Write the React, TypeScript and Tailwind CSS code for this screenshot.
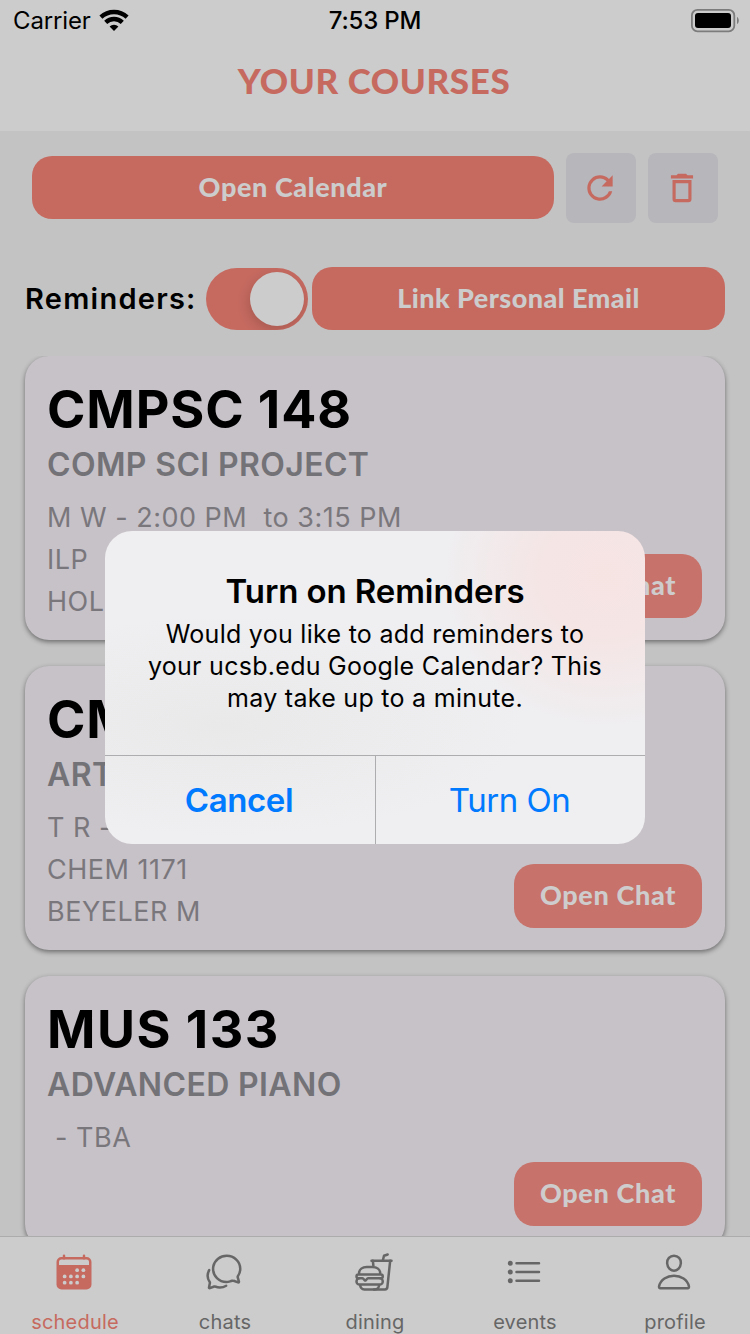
import React from "react";
import { IoChatbubblesOutline, IoFastFoodOutline, IoListOutline, IoPersonOutline } from "react-icons/io5";

interface Course {
  code: string;
  codeSpacing: string;
  name: string;
  lines: string[];
  height: string;
}

const courses: Course[] = [
  {
    code: "CMPSC 148",
    codeSpacing: "tracking-[0.9px]",
    name: "COMP SCI PROJECT",
    lines: ["M W - 2:00 PM  to 3:15 PM", "ILP", "HOLLERER T"],
    height: "h-[284px]",
  },
  {
    code: "CMPSC 190",
    codeSpacing: "tracking-[0.9px]",
    name: "ARTIFICIAL INTEL",
    lines: ["T R - 5:00 PM  to 6:15 PM", "CHEM 1171", "BEYELER M"],
    height: "h-[284px]",
  },
  {
    code: "MUS 133",
    codeSpacing: "tracking-[1.5px]",
    name: "ADVANCED PIANO",
    lines: [" - TBA"],
    height: "h-[272px]",
  },
];

function WifiIcon() {
  return (
    <svg width="30" height="23" viewBox="0 0 30 23" fill="none" stroke="#000" strokeWidth="4.4">
      <path d="M1.9 8.1A19.2 19.2 0 0 1 28.1 8.1" />
      <path d="M6.7 13.3A12 12 0 0 1 23.3 13.3" />
      <path d="M10.6 17.4A6.5 6.5 0 0 1 19.4 17.4L15 22Z" fill="#000" stroke="none" />
    </svg>
  );
}

function BatteryIcon() {
  return (
    <svg width="50" height="24" viewBox="0 0 50 24">
      <rect x="1.9" y="0.9" width="42.4" height="21.4" rx="5.5" fill="none" stroke="#7c7c7c" strokeWidth="1.8" />
      <rect x="5" y="4" width="36" height="15" rx="3" fill="#000" />
      <path d="M47 8C49.4 9 49.4 14 47 15Z" fill="#7c7c7c" />
    </svg>
  );
}

function RefreshIcon() {
  return (
    <svg width="38" height="38" viewBox="0 0 24 24" fill="#c66a60">
      <path d="M17.65 6.35A7.96 7.96 0 0 0 12 4a8 8 0 1 0 7.73 10h-2.08A6 6 0 1 1 12 6c1.66 0 3.14.69 4.22 1.78L13 11h7V4z" />
    </svg>
  );
}

function TrashIcon() {
  return (
    <svg width="38" height="38" viewBox="0 0 24 24" fill="#c66a60">
      <path d="M6 19a2 2 0 0 0 2 2h8a2 2 0 0 0 2-2V7H6v12zM8 9h8v10H8V9zm7.5-5l-1-1h-5l-1 1H5v2h14V4z" />
    </svg>
  );
}

function CalendarIcon() {
  return (
    <svg width="40" height="40" viewBox="0 0 512 512">
      <g fill="none" stroke="#c66a60" strokeWidth="32" strokeLinecap="round">
        <rect x="48" y="80" width="416" height="384" rx="48" />
        <path d="M128 48v32M384 48v32" />
      </g>
      <path d="M48 166h416v250a48 48 0 0 1-48 48H96a48 48 0 0 1-48-48z" fill="#c66a60" />
      <g fill="#cccccc">
        <circle cx="296" cy="232" r="24" />
        <circle cx="376" cy="232" r="24" />
        <circle cx="136" cy="312" r="24" />
        <circle cx="216" cy="312" r="24" />
        <circle cx="296" cy="312" r="24" />
        <circle cx="376" cy="312" r="24" />
        <circle cx="136" cy="392" r="24" />
        <circle cx="216" cy="392" r="24" />
        <circle cx="296" cy="392" r="24" />
      </g>
    </svg>
  );
}

function StatusBar() {
  return (
    <div className="grid h-[41px] grid-cols-3 items-center pr-[10px] pl-[13px] text-[24px]">
      <div className="flex items-center gap-2">
        <span className="tracking-[-0.15px]">Carrier</span>
        <WifiIcon />
      </div>
      <span className="pr-[3px] text-center font-medium tracking-[-0.15px]">7:53 PM</span>
      <div className="flex justify-end">
        <BatteryIcon />
      </div>
    </div>
  );
}

function CourseCard({ course }: { course: Course }) {
  return (
    <article
      className={`relative shrink-0 rounded-[24px] bg-[#c7c2c8] pt-[23px] pl-[22px] shadow-[0_2px_5px_rgba(0,0,0,0.45)] ${course.height}`}
    >
      <h2 className={`h-[61px] text-[52px] leading-[61px] font-bold ${course.codeSpacing}`}>{course.code}</h2>
      <h3 className="mb-2 h-12 pt-px text-[32px] leading-[48px] font-semibold tracking-[0.37px] text-[#737277]">
        {course.name}
      </h3>
      {course.lines.map((line) => (
        <p key={line} className="h-[42px] pt-px text-[27px] leading-[42px] tracking-[0.5px] whitespace-pre text-[#7a777c]">
          {line}
        </p>
      ))}
      <button className="absolute right-[23px] bottom-[22px] h-16 w-[188px] rounded-[20px] bg-[#c7726a] pb-px font-[Lato,sans-serif] text-[27px] font-black tracking-[0.65px] text-[#cecccc]">
        Open Chat
      </button>
    </article>
  );
}

const tabs = [
  { label: "schedule", icon: <CalendarIcon />, color: "text-[#c66a60]" },
  { label: "chats", icon: <IoChatbubblesOutline size={40} />, color: "text-[#666666]" },
  { label: "dining", icon: <IoFastFoodOutline size={40} />, color: "text-[#666666]" },
  { label: "events", icon: <IoListOutline size={40} />, color: "text-[#666666]" },
  { label: "profile", icon: <IoPersonOutline size={40} />, color: "text-[#666666]" },
];

function TabBar() {
  return (
    <nav className="grid h-[98px] shrink-0 grid-cols-5 border-t border-[#acacac] bg-[#cccccc]">
      {tabs.map((tab) => (
        <div key={tab.label} className={`flex flex-col items-center pt-[15px] ${tab.color}`}>
          <div className="mr-[2px]">{tab.icon}</div>
          <span className="mt-[18px] text-[20px] leading-6 tracking-[0.2px]">{tab.label}</span>
        </div>
      ))}
    </nav>
  );
}

function ReminderDialog() {
  return (
    <div
      role="dialog"
      className="absolute top-[531px] left-[105px] flex h-[313px] w-[540px] flex-col overflow-hidden rounded-[27px] bg-[#efeef0] bg-[radial-gradient(ellipse_160px_150px_at_500px_45px,#f6e4e3_0%,#f5e5e5_40%,#efeef000_100%),radial-gradient(ellipse_300px_110px_at_120px_195px,#e9e9ea_0%,#efeef000_100%)]"
    >
      <div className="h-[224px] pt-10 text-center">
        <h1 className="h-[47px] text-[33px] leading-10 font-semibold tracking-[-0.1px]">Turn on Reminders</h1>
        <p className="text-[25px] leading-8 tracking-[0.28px]">
          Would you like to add reminders to
          <br />
          your ucsb.edu Google Calendar? This
          <br />
          may take up to a minute.
        </p>
      </div>
      <div className="flex h-[89px] border-t border-[#adadaf] text-[33px] text-[#007aff]">
        <button className="w-[271px] border-r border-[#adadaf] pt-[2px] pr-[2px] font-semibold tracking-[-0.4px]">
          Cancel
        </button>
        <button className="flex-1 pt-[2px] pr-[2px] tracking-[-0.5px]">Turn On</button>
      </div>
    </div>
  );
}

export default function App() {
  return (
    <div className="relative flex h-[1334px] w-[750px] flex-col overflow-hidden bg-[#c3c3c3] font-[Inter,sans-serif] text-black">
      <header className="h-[131px] shrink-0 bg-[#cccccc]">
        <StatusBar />
        <div className="flex h-[79px] items-center justify-center pr-[2px] font-[Lato,sans-serif] text-[35px] font-black tracking-[0.6px] text-[#c66a60]">
          YOUR COURSES
        </div>
      </header>

      <div className="flex shrink-0 items-start gap-3 px-8 pt-[22px]">
        <button className="mt-[3px] h-[63px] flex-1 rounded-[20px] bg-[#c66a60] font-[Lato,sans-serif] text-[27px] font-black tracking-[0.6px] text-[#cccccc]">
          Open Calendar
        </button>
        <div className="flex size-[70px] items-center justify-center rounded-lg bg-[#b7b6bb] pr-[2px]">
          <RefreshIcon />
        </div>
        <div className="flex size-[70px] items-center justify-center rounded-lg bg-[#b7b6bb] pr-[2px]">
          <TrashIcon />
        </div>
      </div>

      <div className="mt-11 mb-[26px] flex shrink-0 items-center px-[25px]">
        <span className="w-[181px] pt-px text-[29px] font-semibold tracking-[1.25px]">Reminders:</span>
        <div className="flex h-[62px] w-[102px] items-center justify-end overflow-hidden rounded-full bg-[#c66a60] pr-1">
          <div className="size-[54px] rounded-full bg-[#cccccc] shadow-[-2px_4px_12px_rgba(0,0,0,0.15)]" />
        </div>
        <button className="ml-1 h-[63px] flex-1 rounded-[20px] bg-[#c66a60] font-[Lato,sans-serif] text-[27px] font-black tracking-[0.45px] text-[#cccccc]">
          Link Personal Email
        </button>
      </div>

      <main className="flex min-h-0 flex-1 flex-col gap-[26px] overflow-hidden px-[25px]">
        {courses.map((course) => (
          <CourseCard key={course.code} course={course} />
        ))}
      </main>

      <TabBar />
      <ReminderDialog />
    </div>
  );
}
